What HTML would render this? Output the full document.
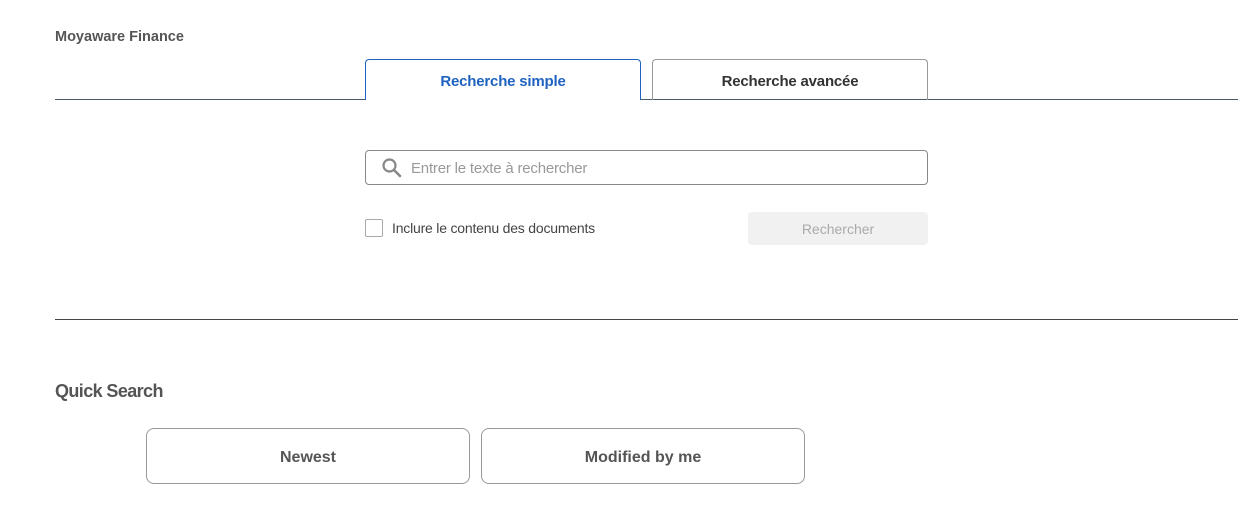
<!DOCTYPE html>
<html><head><meta charset="utf-8"><style>
body{margin:0;width:1254px;height:524px;background:#fff;font-family:"Liberation Sans",sans-serif;position:relative;overflow:hidden}
.a{position:absolute}
.c{display:flex;align-items:center;justify-content:center;box-sizing:border-box}
</style></head><body>
<div class="a" style="left:55px;top:29px;font-size:14.5px;font-weight:bold;color:#555;letter-spacing:0px">Moyaware Finance</div>
<div class="a" style="left:55px;top:99px;width:1183px;height:1px;background:#4a5a6e"></div>
<div class="a c" style="left:365px;top:59px;width:276px;height:41px;padding-top:2px;border:1px solid #1f63c0;border-bottom:none;border-radius:4px 4px 0 0;background:#fff;color:#1f63c0;font-size:15px;font-weight:bold;letter-spacing:-0.2px">Recherche simple</div>
<div class="a c" style="left:652px;top:59px;width:276px;height:41px;padding-top:2px;border:1px solid #999;border-bottom:none;border-radius:4px 4px 0 0;color:#333;font-size:15px;font-weight:bold;letter-spacing:-0.2px">Recherche avancée</div>
<div class="a" style="left:365px;top:150px;width:563px;height:35px;border:1px solid #888;border-radius:4px;box-sizing:border-box"></div>
<svg class="a" style="left:381px;top:157px" width="22" height="22" viewBox="0 0 22 22"><circle cx="8.5" cy="8.5" r="6" fill="none" stroke="#888" stroke-width="2.2"/><path d="M13 13l6 6" stroke="#888" stroke-width="2.6" stroke-linecap="round"/></svg>
<div class="a" style="left:411px;top:160px;font-size:15px;color:#999;letter-spacing:-0.2px">Entrer le texte à rechercher</div>
<div class="a" style="left:365px;top:219px;width:18px;height:18px;border:1px solid #aaa;border-radius:2px;box-sizing:border-box"></div>
<div class="a" style="left:392px;top:220px;font-size:14px;color:#444;letter-spacing:-0.2px">Inclure le contenu des documents</div>
<div class="a c" style="left:748px;top:212px;width:180px;height:33px;padding-top:1px;background:#f1f1f1;border-radius:4px;color:#aaa;font-size:14px">Rechercher</div>
<div class="a" style="left:55px;top:319px;width:1183px;height:1px;background:#444"></div>
<div class="a" style="left:55px;top:381px;font-size:18px;font-weight:bold;color:#555;letter-spacing:-0.6px">Quick Search</div>
<div class="a c" style="left:146px;top:428px;width:324px;height:56px;padding-top:3px;border:1px solid #999;border-radius:8px;color:#555;font-size:16px;font-weight:bold">Newest</div>
<div class="a c" style="left:481px;top:428px;width:324px;height:56px;padding-top:3px;border:1px solid #999;border-radius:8px;color:#555;font-size:16px;font-weight:bold">Modified by me</div>
</body></html>
